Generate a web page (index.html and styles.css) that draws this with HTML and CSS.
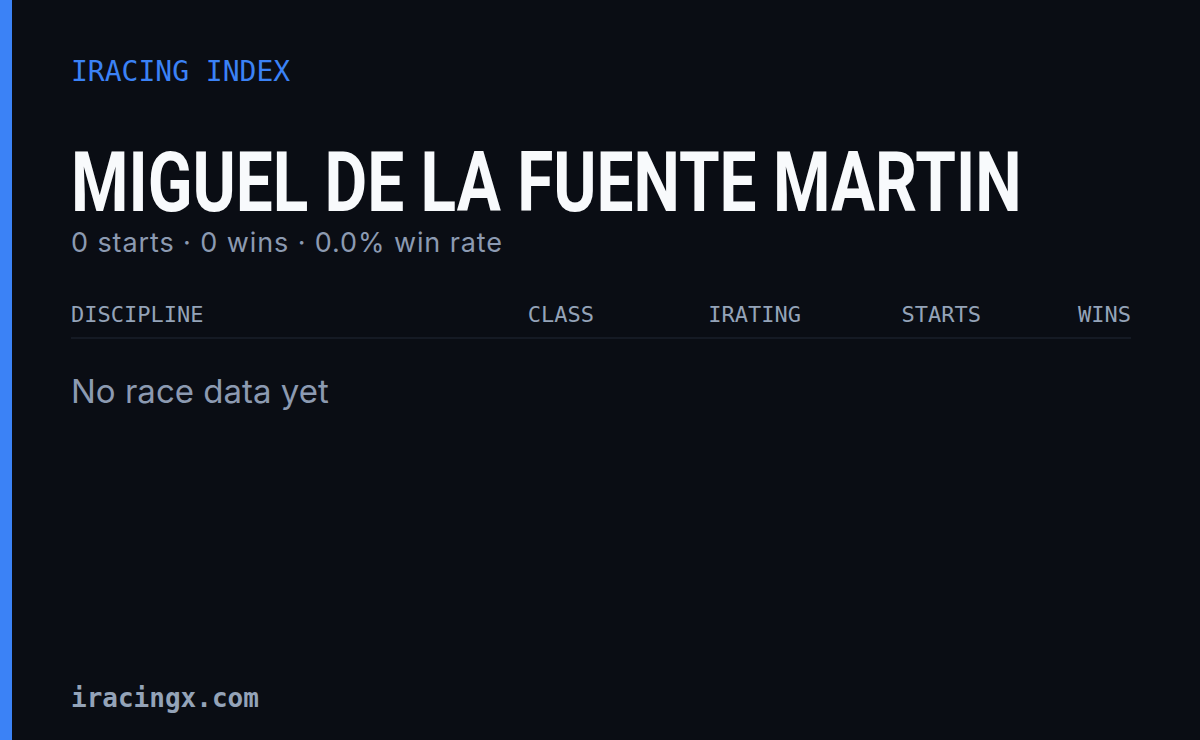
FILE: index.html
```html
<!DOCTYPE html>
<html lang="en">
<head>
    <meta charset="UTF-8">
    <meta name="viewport" content="width=device-width, initial-scale=1.0">
    <title>iRacing Index - Miguel de la Fuente Martin</title>
    <link rel="stylesheet" href="styles.css">
</head>
<body>
    <div class="card">
        <div class="accent"></div>
        <div class="content">
            <div class="brand">IRACING INDEX</div>
            <h1 class="name"><span>MIGUEL DE LA FUENTE MARTIN</span></h1>
            <div class="summary">0 starts · 0 wins · 0.0% win rate</div>

            <div class="table">
                <div class="table-head">
                    <div class="col col-discipline">DISCIPLINE</div>
                    <div class="col col-class">CLASS</div>
                    <div class="col col-irating">IRATING</div>
                    <div class="col col-starts">STARTS</div>
                    <div class="col col-wins">WINS</div>
                </div>
                <div class="empty">No race data yet</div>
            </div>

            <div class="footer">iracingx.com</div>
        </div>
    </div>
</body>
</html>
```

FILE: styles.css
```css
body {
    margin: 0;
    background-color: #0a0d14;
    font-family: Inter, "Open Sans", Arial, sans-serif;
}
.card {
    display: flex;
    width: 1200px;
    height: 740px;
    overflow: hidden;
}
.accent {
    width: 12px;
    flex-shrink: 0;
    background-color: #3b82f6;
}
.content {
    flex: 1;
    min-width: 0;
    display: flex;
    flex-direction: column;
    padding: 52px 69px 24px 59px;
}
.brand {
    font-family: "DejaVu Sans Mono", monospace;
    font-size: 28px;
    line-height: 40px;
    color: #3b82f6;
}
.name {
    margin: 51px 0 0 0;
    font-family: Roboto, "Liberation Sans", sans-serif;
    font-weight: bold;
    font-size: 84px;
    line-height: 80px;
    color: #f8fafc;
    white-space: nowrap;
}
.name span {
    display: inline-block;
    transform: scaleX(0.782);
    transform-origin: left center;
}
.summary {
    margin-top: 2px;
    font-size: 27px;
    line-height: 36px;
    letter-spacing: 0.9px;
    color: #8c9ab1;
}
.table {
    margin-top: 41px;
}
.table-head {
    display: grid;
    grid-template-columns: 1fr 160px 207px 180px 150px;
    padding-bottom: 9px;
    border-bottom: 2px solid #151a24;
    font-family: "DejaVu Sans Mono", monospace;
    font-size: 22px;
    line-height: 26px;
    color: #94a3b8;
}
.col {
    text-align: right;
}
.col-discipline {
    text-align: left;
}
.empty {
    margin-top: 32px;
    font-size: 33px;
    line-height: 40px;
    color: #8c9ab1;
}
.footer {
    margin-top: auto;
    font-family: "DejaVu Sans Mono", monospace;
    font-weight: bold;
    font-size: 26px;
    line-height: 36px;
    color: #94a3b8;
}
```
